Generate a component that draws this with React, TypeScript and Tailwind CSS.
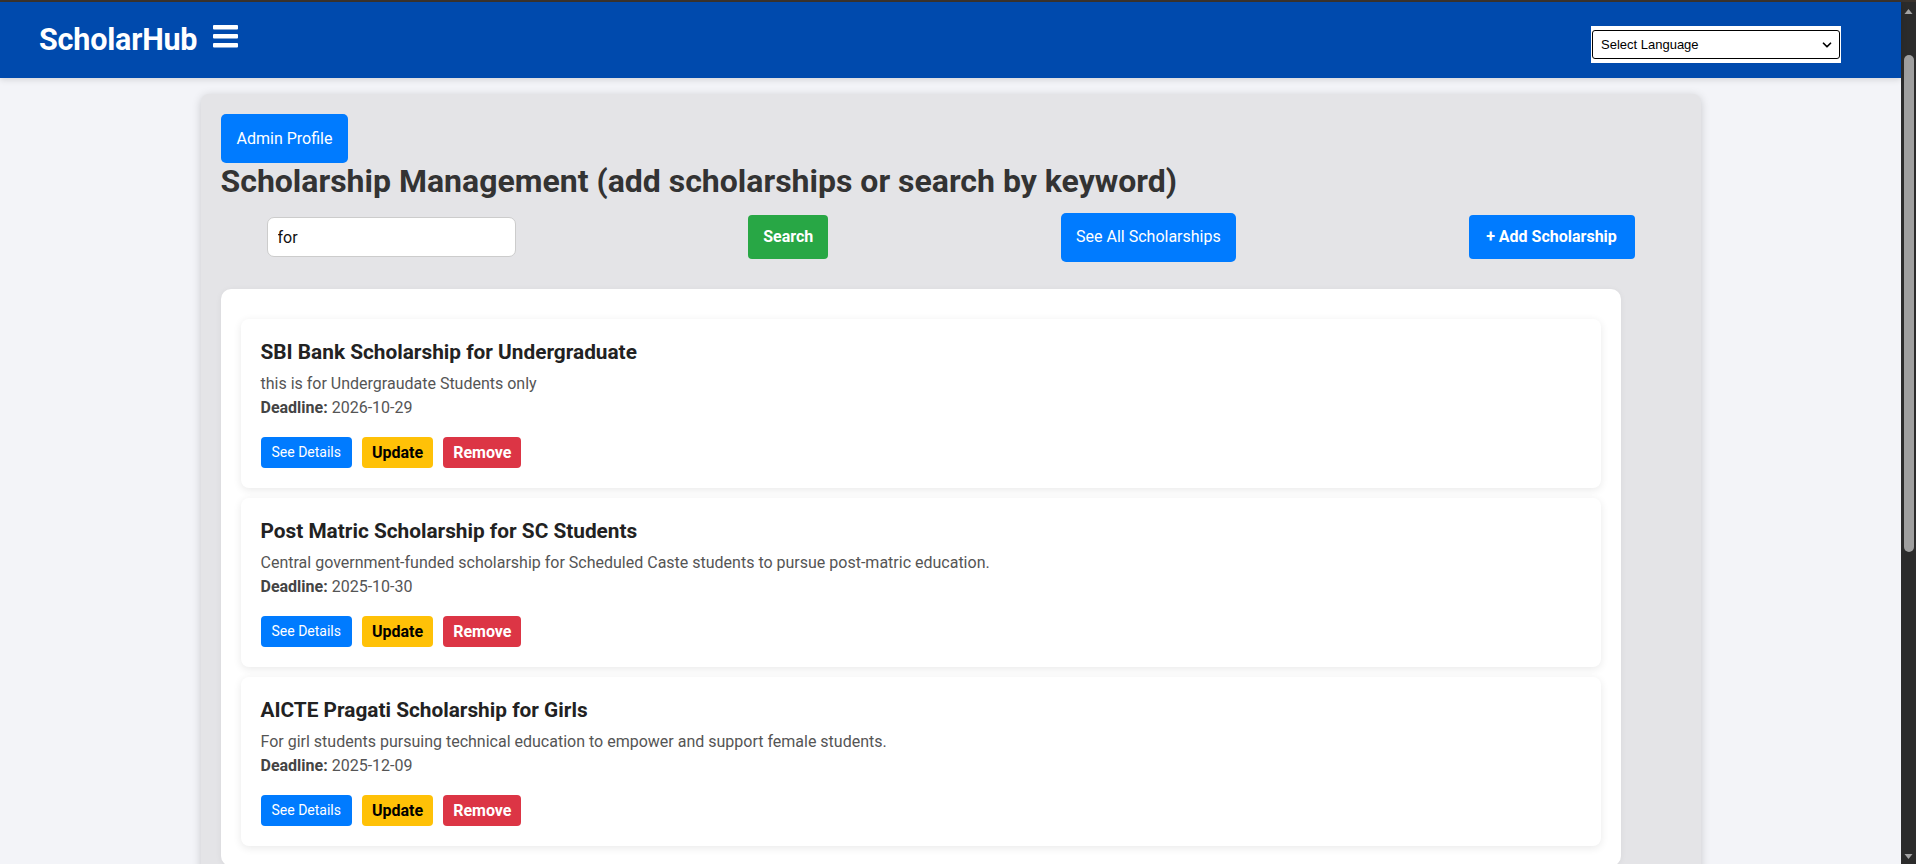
import { ChevronDown } from "lucide-react";

interface Scholarship {
  id: number;
  title: string;
  description: string;
  deadline: string;
}

const scholarships: Scholarship[] = [
  {
    id: 1,
    title: "SBI Bank Scholarship for Undergraduate",
    description: "this is for Undergraudate Students only",
    deadline: "2026-10-29",
  },
  {
    id: 2,
    title: "Post Matric Scholarship for SC Students",
    description:
      "Central government-funded scholarship for Scheduled Caste students to pursue post-matric education.",
    deadline: "2025-10-30",
  },
  {
    id: 3,
    title: "AICTE Pragati Scholarship for Girls",
    description: "For girl students pursuing technical education to empower and support female students.",
    deadline: "2025-12-09",
  },
];

function Bars() {
  return (
    <svg width="25" height="23" viewBox="0 0 25 23" fill="#ffffff" className="mb-[8px]">
      <rect x="0" y="0" width="25" height="4.5" rx="1" />
      <rect x="0" y="9" width="25" height="4.5" rx="1" />
      <rect x="0" y="18" width="25" height="4.5" rx="1" />
    </svg>
  );
}

function ScholarshipCard({ item }: { item: Scholarship }) {
  return (
    <div className="bg-white rounded-[8px] shadow-[0_2px_8px_rgba(0,0,0,0.09)] px-[20px] pt-[18px] pb-[20px]">
      <h3 className="text-[20.8px] leading-[30px] font-bold text-[#222]">{item.title}</h3>
      <p className="mt-[5px] text-[16px] leading-[24px] text-[#555]">{item.description}</p>
      <p className="text-[16px] leading-[24px] text-[#555]">
        <span className="font-bold text-[#444]">Deadline:</span> {item.deadline}
      </p>
      <div className="mt-[17px] flex gap-[10px]">
        <button className="h-[31px] px-[11px] rounded-[4px] bg-[#007bff] text-white text-[14px]">See Details</button>
        <button className="h-[31px] px-[10px] rounded-[4px] bg-[#ffc107] text-black text-[16px] font-bold">Update</button>
        <button className="h-[31px] px-[10px] rounded-[4px] bg-[#dc3545] text-white text-[16px] font-bold">Remove</button>
      </div>
    </div>
  );
}

export default function App() {
  return (
    <div className="h-[864px] w-[1916px] overflow-hidden flex flex-col bg-[#3a332d] font-['Roboto',sans-serif]">
      <div className="h-[2px]" />
      <div className="flex flex-1 min-h-0">
        <div className="flex-1 min-w-0 flex flex-col bg-[#f3f4f8]">
          {/* header */}
          <header className="h-[76px] bg-[#004aad] flex items-center justify-between pl-[39px] pr-[60px] shadow-[0_2px_6px_rgba(0,0,0,0.12)] relative z-10">
            <div className="flex items-center gap-[16px]">
              <span className="text-white text-[30.5px] font-bold leading-none tracking-[-0.2px]">ScholarHub</span>
              <Bars />
            </div>
            <div className="self-start mt-[24px] bg-white w-[250px] h-[37px] px-[1px] flex items-center">
              <div className="w-full h-[29px] border border-black rounded-[3px] flex items-center justify-between pl-[8px] pr-[5px] font-['Liberation_Sans',Arial,sans-serif] text-[13px] text-black">
                <span>Select Language</span>
                <ChevronDown size={14} strokeWidth={3} />
              </div>
            </div>
          </header>

          {/* body */}
          <main className="flex-1 min-h-0 pt-[16px]">
            <div className="w-[1500px] mx-auto bg-[#e4e4e7] rounded-[8px] shadow-[0_2px_10px_rgba(0,0,0,0.18)] p-[20px] h-[900px]">
              <button className="h-[49px] px-[16px] rounded-[5px] bg-[#007bff] text-white text-[16px]">Admin Profile</button>
              <h2 className="text-[32px] leading-[37px] font-bold text-[#333]">
                Scholarship Management (add scholarships or search by keyword)
              </h2>

              <div className="mt-[5px] h-[64px] flex items-center justify-between px-[46px]">
                <input
                  defaultValue="for"
                  className="w-[249px] h-[40px] rounded-[7px] border border-[#ccc] bg-white px-[10px] text-[16px] text-[#111] outline-none"
                />
                <button className="h-[44px] w-[80px] rounded-[4px] bg-[#28a745] text-white text-[16px] font-bold">Search</button>
                <button className="h-[49px] px-[15px] rounded-[5px] bg-[#007bff] text-white text-[16px]">See All Scholarships</button>
                <button className="h-[44px] w-[166px] rounded-[4px] bg-[#007bff] text-white text-[16px] font-bold">+ Add Scholarship</button>
              </div>

              <div className="mt-[20px] w-[1400px] bg-white rounded-[10px] shadow-[0_1px_6px_rgba(0,0,0,0.06)] px-[20px] pt-[30px] pb-[20px] flex flex-col gap-[10px]">
                {scholarships.map((s) => (
                  <ScholarshipCard key={s.id} item={s} />
                ))}
              </div>
            </div>
          </main>
        </div>

        {/* scrollbar */}
        <div className="w-[15px] bg-[#2b2b2b] flex flex-col items-center">
          <svg width="15" height="15" viewBox="0 0 15 15" className="mt-[2px]">
            <path d="M3.5 10 L7.5 5 L11.5 10 Z" fill="#a3a3a3" />
          </svg>
          <div className="mt-[36px] w-[10px] h-[497px] rounded-full bg-[#9f9f9f]" />
          <div className="flex-1" />
          <svg width="15" height="15" viewBox="0 0 15 15">
            <path d="M3.5 5 L7.5 10 L11.5 5 Z" fill="#a3a3a3" />
          </svg>
        </div>
      </div>
    </div>
  );
}
